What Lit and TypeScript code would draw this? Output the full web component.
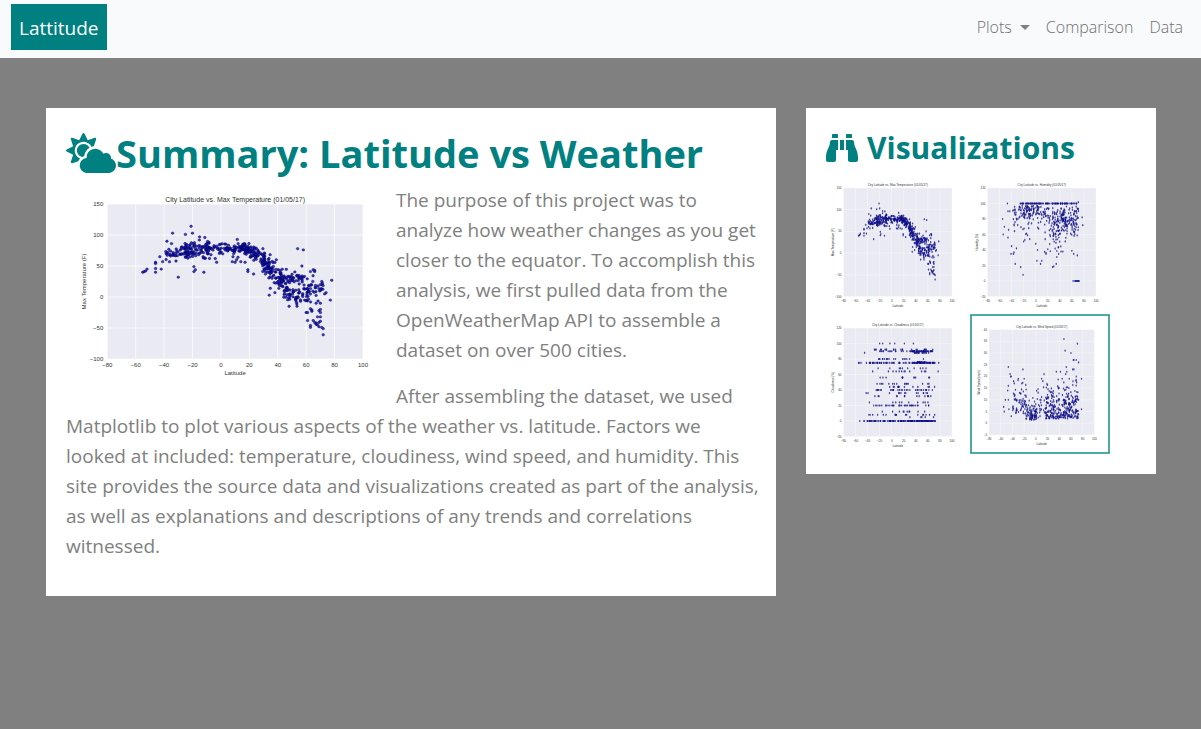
import { LitElement, html, svg, css } from "lit";
import { customElement, property } from "lit/decorators.js";

type Point = [number, number];

interface Plot {
  title: string;
  yLabel: string;
  yMin: number;
  yMax: number;
  yStep: number;
  points: Point[];
}

/** Small seeded generator, so that each plot is drawn the same way on every load. */
function random(seed: number) {
  let s = seed;
  const next = () => {
    s = (s * 1664525 + 1013904223) % 4294967296;
    return s / 4294967296;
  };
  return {
    next,
    range: (a: number, b: number) => a + (b - a) * next(),
    bell: () => (next() + next() + next() + next() - 2) * 1.7,
  };
}

function temperaturePoints(): Point[] {
  const r = random(7);
  const points: Point[] = [
    [-21, 114], [-34, 103], [-20, 103], [-25, 101], [-15, 97], [-38, 90], [-55, 40],
    [-54, 41], [-53, 42], [-52, 45], [-43, 65], [-46, 56], [-46, 54], [-46, 46],
    [-46, 40], [-42, 45], [-41, 57], [-30, 32], [-19, 49], [-18, 44], [-19, 41],
    [-12, 40], [54, 78], [58, 76], [57, 50], [78, 27], [77, -5], [34, 3], [38, 7],
    [48, -15], [19, 44], [19, 41], [23, 37], [72, -61], [72, -51], [71, -49],
    [63, -46], [63, -49], [61, -38], [65, -38], [70, -39], [69, -41], [67, -42],
    [68, -45], [69, -48], [66, -41], [67, -44], [70, -32], [68, -32], [60, -25], [61, -25],
    [64, -23], [64, -21], [70, -25], [70, -20], [69, -22], [63, -19], [67, -10], [70, -10],
    [74, 7], [73, 5], [65, 44], [63, 41], [66, 41], [66, 43], [71, 25], [70, 20],
    [8, 57], [10, 56], [11, 60], [14, 57], [17, 56], [-3, 56], [-4, 62], [12, 64],
  ];
  const band = (n: number, x0: number, x1: number, y0: number, y1: number, s0: number, s1: number) => {
    for (let i = 0; i < n; i++) {
      const t = r.next();
      points.push([x0 + (x1 - x0) * t, y0 + (y1 - y0) * t + r.bell() * (s0 + (s1 - s0) * t)]);
    }
  };
  band(40, -39, -24, 66, 77, 6, 7);
  band(60, -26, -8, 78, 79, 7, 6);
  band(95, -10, 20, 79, 79, 5, 5);
  band(22, -26, -8, 68, 68, 3, 3);
  band(80, 15, 31, 81, 62, 4, 7);
  band(95, 29, 44, 56, 27, 11, 10);
  band(50, 42, 58, 30, 29, 8, 4);
  band(65, 44, 64, 6, 0, 7, 9);
  band(32, 58, 72, 24, 12, 9, 9);
  return points;
}

function humidityPoints(): Point[] {
  const r = random(21);
  const points: Point[] = [
    [-55, 80], [-54, 60], [-52, 70], [-47, 100], [-46, 90], [-45, 66], [-46, 56], [-43, 90],
    [-40, 45], [-41, 35], [-37, 35], [-36, 37], [-34, 22], [-32, 42], [-25, 18], [-21, 8],
    [-20, 51], [-18, 53], [-10, 54], [0, 48], [2, 26], [3, 40], [8, 22], [10, 26], [17, 35],
    [20, 41], [28, 18], [30, 19], [34, 22], [35, 31], [38, 35], [42, 38], [45, 38], [60, 39],
    [63, 35], [69, 33], [77, 82], [78, 72], [62, 0], [65, 0], [66, 0], [67, 0], [68, 0],
    [69, 0], [70, 0], [71, 0], [72, 0],
  ];
  for (let i = 0; i < 85; i++) points.push([r.range(-26, 72), 100]);
  for (let i = 0; i < 55; i++) points.push([r.range(-38, -10), 97 - Math.abs(r.bell()) * 18]);
  for (let i = 0; i < 75; i++) points.push([r.range(-22, 12), 97 - Math.abs(r.bell()) * 12]);
  for (let i = 0; i < 95; i++) points.push([r.range(12, 50), 94 - Math.abs(r.bell()) * 21]);
  for (let i = 0; i < 35; i++) points.push([r.range(24, 42), 62 + r.bell() * 12]);
  for (let i = 0; i < 120; i++) points.push([r.range(42, 71), 78 + r.bell() * 10]);
  return points;
}

function cloudinessPoints(): Point[] {
  const r = random(5);
  const points: Point[] = [
    [-20, 100], [-15, 100], [-3, 100], [5, 100], [21, 100], [36, 100], [-45, 88],
    [-55, 75], [-54, 75], [-51, 75], [-42, 75], [78, 75], [77, 64], [-53, 0], [-37, 24],
  ];
  const rows: [number, number, number, number][] = [
    [92, 22, -34, 70], [90, 16, -32, 32], [90, 50, 32, 68], [88, 16, 35, 62], [80, 18, -34, 62],
    [75, 40, -38, 40], [75, 40, 38, 72], [76, 14, 40, 60], [68, 10, -34, 62], [64, 12, -32, 66],
    [56, 12, -26, 64], [48, 16, -28, 74], [44, 14, -10, 72], [40, 32, -32, 68], [36, 14, -46, 62],
    [32, 14, -30, 66], [24, 9, -30, 64], [20, 34, -32, 72], [12, 10, -32, 66], [8, 18, -46, 72],
    [5, 5, 30, 70], [0, 30, -46, 0], [0, 85, -8, 60], [0, 22, 48, 73],
  ];
  for (const [y, n, x0, x1] of rows) {
    for (let i = 0; i < n; i++) points.push([r.range(x0, x1), y]);
  }
  return points;
}

function windPoints(): Point[] {
  const r = random(33);
  const points: Point[] = [
    [48, 36], [71, 34], [50, 31], [60, 30], [64, 27], [65, 27], [69, 27], [73, 26], [52, 24],
    [63, 23], [65, 23], [53, 22], [35, 22], [42, 22], [69, 20], [78, 19], [78, 6], [-47, 24],
    [-22, 23], [14, 21], [-44, 21], [-43, 20], [-42, 20], [-38, 18], [-47, 16], [-48, 14],
    [-52, 10], [-47, 10], [-55, 7], [-54, 5], [-46, 6], [-42, 3], [10, 19], [12, 18],
    [-30, 19], [-20, 19], [-24, 17], [45, 19], [51, 21], [57, 19],
  ];
  for (let i = 0; i < 65; i++) points.push([r.range(-40, -16), 4 + Math.abs(r.bell()) * 6.5]);
  for (let i = 0; i < 85; i++) points.push([r.range(-18, 2), 1.5 + Math.abs(r.bell()) * 4]);
  for (let i = 0; i < 28; i++) points.push([r.range(0, 18), 2 + Math.abs(r.bell()) * 7]);
  for (let i = 0; i < 220; i++) points.push([r.range(16, 73), 2 + Math.abs(r.bell()) * 4]);
  for (let i = 0; i < 85; i++) points.push([r.range(18, 72), 8 + Math.abs(r.bell()) * 5]);
  return points;
}

const temperature: Plot = {
  title: "City Latitude vs. Max Temperature (01/05/17)",
  yLabel: "Max Temperature (F)",
  yMin: -100, yMax: 150, yStep: 50,
  points: temperaturePoints(),
};
const humidity: Plot = {
  title: "City Latitude vs. Humidity (01/05/17)",
  yLabel: "Humidity (%)",
  yMin: -20, yMax: 120, yStep: 20,
  points: humidityPoints(),
};
const cloudiness: Plot = {
  title: "City Latitude vs. Cloudiness (01/05/17)",
  yLabel: "Cloudiness (%)",
  yMin: -20, yMax: 120, yStep: 20,
  points: cloudinessPoints(),
};
const wind: Plot = {
  title: "City Latitude vs. Wind Speed (01/05/17)",
  yLabel: "Wind Speed (mph)",
  yMin: -5, yMax: 40, yStep: 5,
  points: windPoints(),
};

@customElement("scatter-plot")
export class ScatterPlot extends LitElement {
  @property({ attribute: false }) plot: Plot = temperature;
  @property({ type: Boolean }) compact = false;

  static styles = css`
    :host { display: block; }
    svg { display: block; width: 100%; height: auto; }
    .area { fill: #eaeaf2; }
    .line { stroke: #fff; stroke-width: 1; opacity: 0.7; }
    .mark { fill: #1010c8; stroke: #00003c; stroke-width: 0.6; fill-opacity: 0.8; stroke-opacity: 0.7; }
    .compact .mark { fill: #10108a; stroke: none; fill-opacity: 0.8; }
    .compact .line { stroke-width: 0.5; }
    text { font-family: "Liberation Sans", Arial, sans-serif; font-size: 6px; fill: #333; text-anchor: middle; }
    .title { font-size: 7px; }
    .tick { text-anchor: end; }
    .compact text { font-size: 3px; }
  `;

  render() {
    const { title, yLabel, yMin, yMax, yStep, points } = this.plot;
    const small = this.compact;
    const w = small ? 140 : 330;
    const h = small ? 140 : 200;
    const left = w * 0.125;
    const top = h * 0.1;
    const pw = w * 0.775;
    const ph = h * 0.775;
    const px = (v: number) => left + ((v + 80) / 180) * pw;
    const py = (v: number) => top + ((yMax - v) / (yMax - yMin)) * ph;
    const xs = Array.from({ length: 10 }, (_, i) => -80 + i * 20);
    const ys = Array.from({ length: Math.round((yMax - yMin) / yStep) + 1 }, (_, i) => yMin + i * yStep);
    const label = (v: number) => String(v).replace("-", "\u2212");
    const gap = small ? 2 : 4;
    const labelX = small ? 8 : 20;
    return html`
      <svg class=${small ? "compact" : "full"} viewBox="0 0 ${w} ${h}" role="img" aria-label=${title}>
        <rect class="area" x=${left} y=${top} width=${pw} height=${ph}></rect>
        ${xs.map((v) => svg`<line class="line" x1=${px(v)} x2=${px(v)} y1=${top} y2=${top + ph}></line>
          <text x=${px(v)} y=${top + ph + (small ? 5 : 8)}>${label(v)}</text>`)}
        ${ys.map((v) => svg`<line class="line" x1=${left} x2=${left + pw} y1=${py(v)} y2=${py(v)}></line>
          <text class="tick" x=${left - gap} y=${py(v) + (small ? 1 : 2)}>${label(v)}</text>`)}
        ${points.map(([x, y]) => svg`<ellipse class="mark" cx=${px(x)} cy=${py(y)}
          rx=${small ? 0.7 : 1.3} ry=${small ? 1.1 : 1.2}></ellipse>`)}
        <text class="title" x=${left + pw / 2} y=${top - (small ? 2 : 2)}>${title}</text>
        <text x=${left + pw / 2} y=${top + ph + (small ? 10 : 16)}>Latitude</text>
        <text transform="translate(${labelX} ${top + ph / 2}) rotate(-90)">${yLabel}</text>
      </svg>
    `;
  }
}

@customElement("app-root")
export class AppRoot extends LitElement {
  static styles = css`
    :host {
      display: block;
      min-height: 100vh;
      background: #808080;
      color: #808080;
      font-family: "Segoe UI", "Open Sans", sans-serif;
      font-size: 16px;
      line-height: 24px;
    }
    *, *::before, *::after { box-sizing: border-box; }
    a { color: inherit; text-decoration: none; }
    h1, h2, p { margin: 0; }
    .navbar {
      display: flex;
      align-items: center;
      justify-content: space-between;
      padding: 4px 10px 8px;
      background: #f8fafc;
    }
    .brand {
      margin-left: 1px;
      padding: 9px 8px 7px;
      background: #008080;
      color: #fff;
      font-size: 19px;
      line-height: 30px;
    }
    .links { display: flex; margin: 0; padding: 0; list-style: none; }
    .link {
      display: flex;
      align-items: center;
      padding: 8px;
      border: 0;
      background: none;
      color: #707070;
      font-family: "Segoe UI Light", "Open Sans", sans-serif;
      font-size: 16px;
      font-weight: 300;
      line-height: 24px;
    }
    .caret {
      margin-left: 8px;
      border: 5px solid transparent;
      border-top-color: #808080;
      border-bottom: 0;
    }
    .container {
      display: flex;
      flex-wrap: wrap;
      align-items: flex-start;
      padding: 50px 30px 0 31px;
    }
    .column { padding: 0 15px; }
    .wide { flex: 0 0 66.6667%; }
    .narrow { flex: 0 0 33.3333%; }
    .panel { padding: 20px 12px 20px 20px; background: #fff; }
    .heading {
      display: flex;
      align-items: center;
      padding-top: 1px;
      margin-bottom: 7px;
      color: #008080;
      font-weight: 700;
    }
    .summary-heading { font-size: 38px; line-height: 48px; }
    .side-heading { gap: 9px; font-size: 30px; line-height: 38px; }
    .icon { flex: none; fill: currentColor; }
    .figure { float: left; width: 330px; max-width: 100%; }
    .text { padding-top: 1px; margin-bottom: 15px; font-size: 19px; line-height: 30px; }
    .thumbs { display: grid; grid-template-columns: 140px 140px; column-gap: 4px; }
    .thumb { display: block; border: 0 solid #4da9a4; }
    .current { border-width: 2px; }
    @media (max-width: 800px) {
      .wide, .narrow { flex-basis: 100%; margin-bottom: 30px; }
    }
  `;

  render() {
    return html`
      <nav class="navbar">
        <a class="brand" href="#">Lattitude</a>
        <ul class="links">
          <li><button class="link" type="button" aria-haspopup="true">Plots<span class="caret"></span></button></li>
          <li><a class="link" href="#comparison">Comparison</a></li>
          <li><a class="link" href="#data">Data</a></li>
        </ul>
      </nav>
      <main class="container">
        <section class="column wide">
          <div class="panel">
            <h1 class="heading summary-heading">
              <svg class="icon" width="50" height="40" viewBox="0 0 640 512" aria-hidden="true">
                <path d="M575.2 325.7c.2-1.9.8-3.7.8-5.6 0-35.3-28.7-64-64-64-12.6 0-24.2 3.8-34.1 10-17.6-38.8-56.5-66-101.9-66-61.8 0-112 50.1-112 112 0 3 .7 5.8.9 8.7-49.6 3.7-88.9 44.7-88.9 95.3 0 53 43 96 96 96h272c53 0 96-43 96-96 0-42.1-27.2-77.4-64.8-90.4zm-430.4-22.6c-43.7-43.7-43.7-114.7 0-158.3 43.7-43.7 114.7-43.7 158.4 0 9.7 9.7 16.9 20.9 22.3 32.7 9.8-3.7 20.1-6 30.7-7.5L386 81.1c4-11.9-7.3-23.1-19.2-19.2L279 91.2 237.5 8.4C232-2.8 216-2.8 210.4 8.4L169 91.2 81.1 61.9C69.3 58 58 69.3 61.9 81.1l29.3 87.8-82.8 41.5c-11.2 5.6-11.2 21.5 0 27.1l82.8 41.4-29.3 87.8c-4 11.9 7.3 23.1 19.2 19.2l76.1-25.3c6.1-12.4 14-23.7 23.6-33.5-13.1-5.4-25.4-13.4-36-24zm-4.8-79.2c0 40.8 29.3 74.8 67.9 82.3 8-4.7 16.3-8.8 25.2-11.7 5.4-44.3 31-82.5 67.4-105C287.3 160.4 258 140 224 140c-46.3 0-84 37.6-84 83.9z"></path>
              </svg>Summary: Latitude vs Weather
            </h1>
            <scatter-plot class="figure" .plot=${temperature}></scatter-plot>
            <p class="text">
              The purpose of this project was to analyze how weather changes as you get closer to the
              equator. To accomplish this analysis, we first pulled data from the OpenWeatherMap API to
              assemble a dataset on over 500 cities.
            </p>
            <p class="text">
              After assembling the dataset, we used Matplotlib to plot various aspects of the weather vs.
              latitude. Factors we looked at included: temperature, cloudiness, wind speed, and humidity.
              This site provides the source data and visualizations created as part of the analysis, as
              well as explanations and descriptions of any trends and correlations witnessed.
            </p>
          </div>
        </section>
        <aside class="column narrow">
          <div class="panel">
            <h2 class="heading side-heading">
              <svg class="icon" width="32" height="32" viewBox="0 0 512 512" aria-hidden="true">
                <path d="M416 48c0-8.84-7.16-16-16-16h-64c-8.84 0-16 7.16-16 16v48h96V48zM63.91 159.99C61.4 253.84 3.46 274.22 0 404v44c0 17.67 14.33 32 32 32h96c17.67 0 32-14.33 32-32V288h32V128H95.84c-17.63 0-31.45 14.37-31.93 31.99zm384.18 0c-.48-17.62-14.3-31.99-31.93-31.99H320v160h32v160c0 17.67 14.33 32 32 32h96c17.67 0 32-14.33 32-32v-44c-3.46-129.78-61.4-150.16-63.91-244.01zM176 32h-64c-8.84 0-16 7.16-16 16v48h96V48c0-8.84-7.16-16-16-16zm48 256h64V128h-64v160z"></path>
              </svg>Visualizations
            </h2>
            <div class="thumbs">
              <a class="thumb" href="#temperature"><scatter-plot compact .plot=${temperature}></scatter-plot></a>
              <a class="thumb" href="#humidity"><scatter-plot compact .plot=${humidity}></scatter-plot></a>
              <a class="thumb" href="#cloudiness"><scatter-plot compact .plot=${cloudiness}></scatter-plot></a>
              <a class="thumb current" href="#wind"><scatter-plot compact .plot=${wind}></scatter-plot></a>
            </div>
          </div>
        </aside>
      </main>
    `;
  }
}
